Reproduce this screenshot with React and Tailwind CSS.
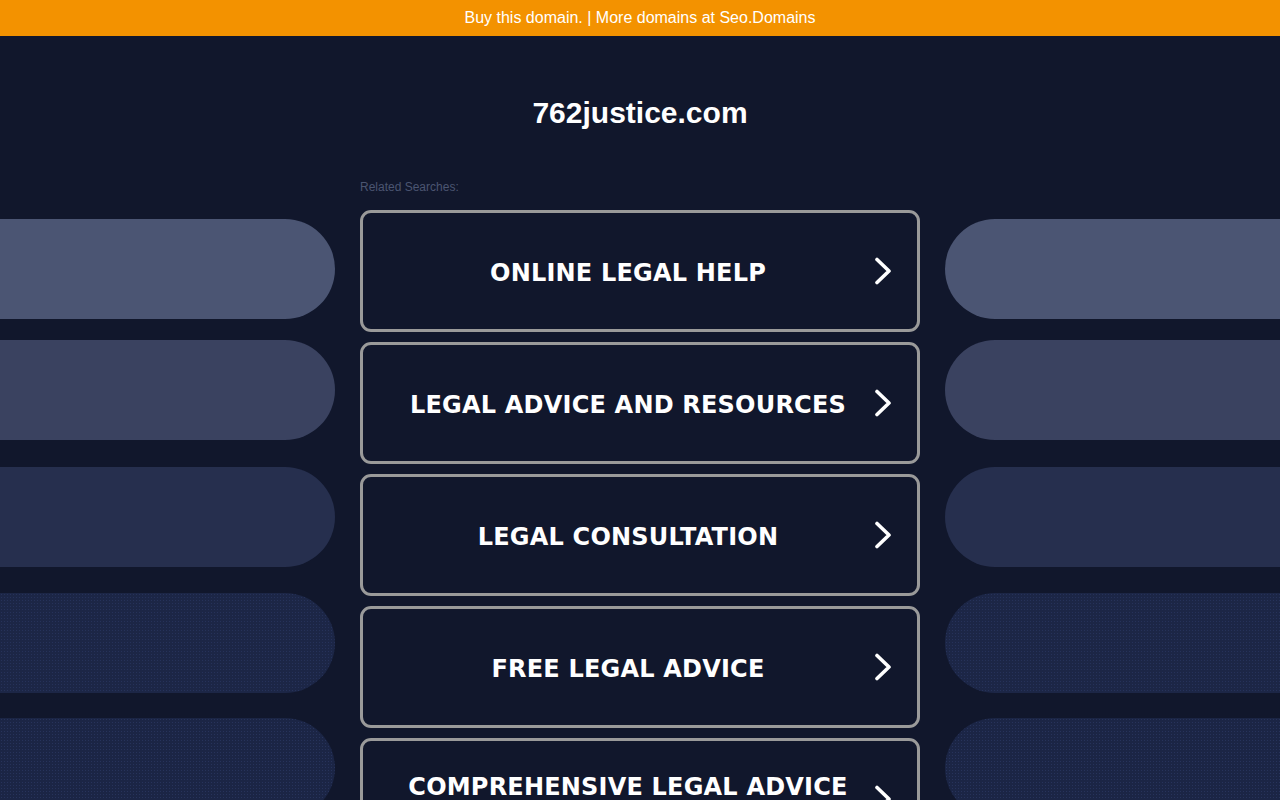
export default function App() {
  const items = [
    "ONLINE LEGAL HELP",
    "LEGAL ADVICE AND RESOURCES",
    "LEGAL CONSULTATION",
    "FREE LEGAL ADVICE",
    "COMPREHENSIVE LEGAL ADVICE",
  ];
  const pills = [
    { mt: "mt-[9px]", cls: "bg-[#4b5573]" },
    { mt: "mt-[21px]", cls: "bg-[#3a4260]" },
    { mt: "mt-[27px]", cls: "bg-[#262f4e]" },
    { mt: "mt-[26px]", cls: "bg-[#1c2646] bg-[radial-gradient(circle,#26325a_0.8px,transparent_1px)] bg-[length:3px_3px]" },
    { mt: "mt-[25px]", cls: "bg-[#1b2545] bg-[radial-gradient(circle,#27335b_0.8px,transparent_1px)] bg-[length:3px_3px]" },
  ];
  return (
    <div className="w-full h-[800px] overflow-hidden bg-[#11172c] font-['Liberation_Sans',Arial,sans-serif]">
      <div className="h-9 bg-[#f39200] flex items-center justify-center text-white text-[16px]">
        Buy this domain. | More domains at Seo.Domains
      </div>
      <div className="pt-[60px] text-center text-white font-bold text-[30px] leading-[34px]">
        762justice.com
      </div>
      <div className="w-[560px] mx-auto mt-[50px] text-[12px] leading-[14px] text-[#4b5571]">
        Related Searches:
      </div>
      <div className="flex mt-[16px]">
        <div className="flex-1 flex flex-col items-start">
          {pills.map((p, i) => (
            <div key={i} className={`${p.mt} w-[335px] h-[100px] rounded-r-[50px] ${p.cls}`} />
          ))}
        </div>
        <div className="w-[560px] flex flex-col gap-[10px]">
          {items.map((t, i) => (
            <div
              key={t}
              className="relative h-[122px] shrink-0 rounded-[11px] border-[3px] border-[#9a9a9a] bg-[#11172c] flex items-center justify-center pr-[24px]"
            >
              <div className="flex flex-col items-center pt-[3px]">
                <span className="text-white font-bold text-[24px] leading-[28px] tracking-[0.2px] font-['DejaVu_Sans',Verdana,sans-serif]">
                  {t}
                </span>
                {i === items.length - 1 && <span className="h-[28px]" />}
              </div>
              <svg
                className="absolute right-[25px] top-1/2 -translate-y-1/2"
                width="18"
                height="28"
                viewBox="0 0 18 28"
                fill="none"
              >
                <path d="M3 2.5 L15 14 L3 25.5" stroke="white" strokeWidth="3.6" strokeLinecap="round" strokeLinejoin="round" />
              </svg>
            </div>
          ))}
        </div>
        <div className="flex-1 flex flex-col items-end">
          {pills.map((p, i) => (
            <div key={i} className={`${p.mt} w-[335px] h-[100px] rounded-l-[50px] ${p.cls}`} />
          ))}
        </div>
      </div>
    </div>
  );
}
